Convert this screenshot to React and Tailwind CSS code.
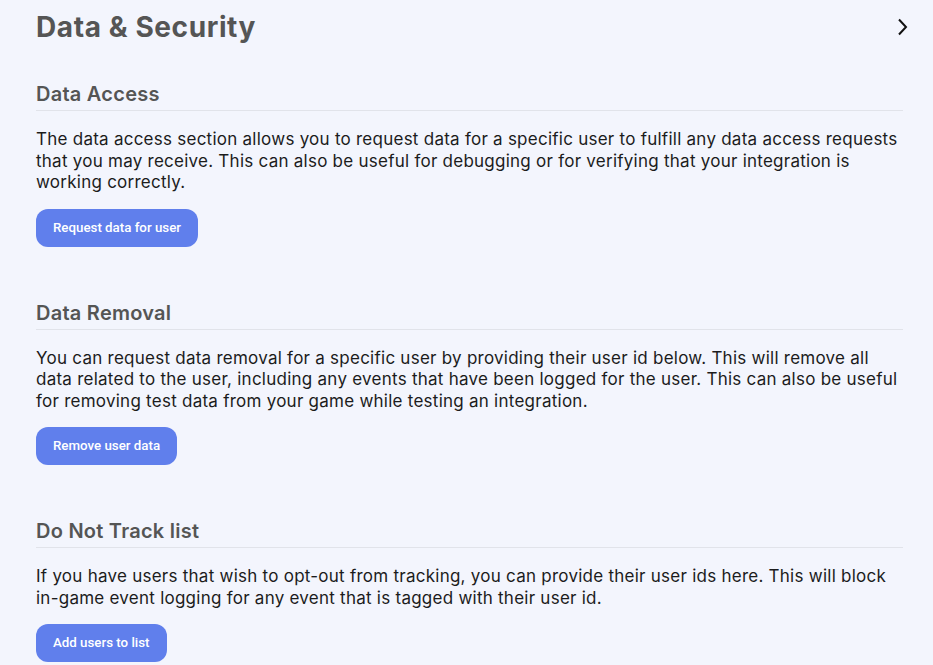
import React from "react";

const sections = [
  {
    title: "Data Access",
    text: "The data access section allows you to request data for a specific user to fulfill any data access requests that you may receive. This can also be useful for debugging or for verifying that your integration is working correctly.",
    button: "Request data for user",
  },
  {
    title: "Data Removal",
    text: "You can request data removal for a specific user by providing their user id below. This will remove all data related to the user, including any events that have been logged for the user. This can also be useful for removing test data from your game while testing an integration.",
    button: "Remove user data",
  },
  {
    title: "Do Not Track list",
    text: "If you have users that wish to opt-out from tracking, you can provide their user ids here. This will block in-game event logging for any event that is tagged with their user id.",
    button: "Add users to list",
  },
];

export default function App() {
  return (
    <div
      className="min-h-[665px] w-full bg-[#f3f5fd] pl-[36px] pr-[30px]"
      style={{ fontFamily: "Inter, 'Noto Sans', sans-serif" }}
    >
      <div className="flex h-[54px] items-center justify-between">
        <h1 className="text-[28px] font-bold tracking-[0.6px] text-[#555555]">Data &amp; Security</h1>
        <svg width="12" height="18" viewBox="0 0 12 18" className="mr-[-5px]">
          <path d="M3 1.5 L10 9 L3 16.5" fill="none" stroke="#111" strokeWidth="2" />
        </svg>
      </div>
      <div className="flex flex-col">
        {sections.map((s, i) => (
          <div key={i} className={i === 0 ? "mt-[27px]" : "mt-[53px]"}>
            <h2 className="border-b border-[#e1e3ea] pb-[3px] text-[20px] font-semibold leading-[26px] tracking-[0.25px] text-[#555555]">
              {s.title}
            </h2>
            <p className="mt-[18px] text-[17px] leading-[21.5px] tracking-[0.25px] text-[#1c1c1c]">{s.text}</p>
            <button
              className="mt-[15px] h-[38px] rounded-[12px] bg-[#607fec] px-[17px] text-[13.3px] font-medium text-white"
              style={{ fontFamily: "Roboto, 'Liberation Sans', sans-serif" }}
            >
              {s.button}
            </button>
          </div>
        ))}
      </div>
    </div>
  );
}
